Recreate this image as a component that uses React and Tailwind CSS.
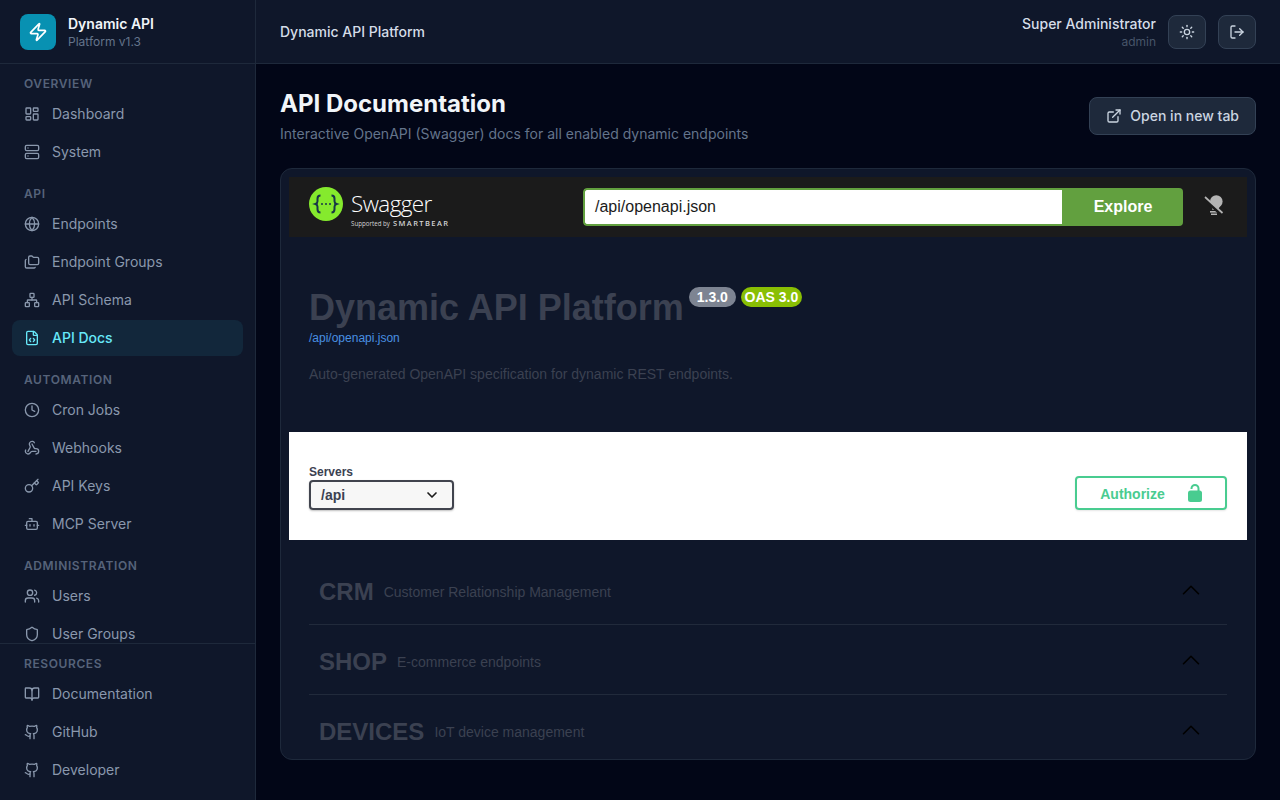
import React from "react";
import {
  LayoutDashboard,
  Server,
  Globe,
  Folders,
  Network,
  FileCode,
  Clock,
  Webhook,
  Key,
  Bot,
  Users,
  Shield,
  BookOpen,
  Github,
  Sun,
  LogOut,
  ExternalLink,
  Zap,
  ChevronDown,
  ChevronUp,
} from "lucide-react";

const sections = [
  {
    title: "Overview",
    items: [
      { label: "Dashboard", icon: LayoutDashboard },
      { label: "System", icon: Server },
    ],
  },
  {
    title: "API",
    items: [
      { label: "Endpoints", icon: Globe },
      { label: "Endpoint Groups", icon: Folders },
      { label: "API Schema", icon: Network },
      { label: "API Docs", icon: FileCode, active: true },
    ],
  },
  {
    title: "Automation",
    items: [
      { label: "Cron Jobs", icon: Clock },
      { label: "Webhooks", icon: Webhook },
      { label: "API Keys", icon: Key },
      { label: "MCP Server", icon: Bot },
    ],
  },
  {
    title: "Administration",
    items: [
      { label: "Users", icon: Users },
      { label: "User Groups", icon: Shield },
    ],
  },
];

const resources = [
  { label: "Documentation", icon: BookOpen },
  { label: "GitHub", icon: Github },
  { label: "Developer", icon: Github },
];

const tags = [
  { name: "CRM", desc: "Customer Relationship Management" },
  { name: "SHOP", desc: "E-commerce endpoints" },
  { name: "DEVICES", desc: "IoT device management" },
];

function NavSection({ title, items }) {
  return (
    <div>
      <div className="px-3 mb-1 h-4 text-xs leading-4 font-semibold uppercase tracking-wider text-[#56637a]">
        {title}
      </div>
      <div className="flex flex-col gap-0.5">
        {items.map((item) => (
          <a
            key={item.label}
            className={
              item.active
                ? "flex items-center gap-3 h-9 px-3 rounded-lg text-sm font-medium bg-[#12273b] text-[#67e8f9]"
                : "flex items-center gap-3 h-9 px-3 rounded-lg text-sm font-normal text-[#8a98ad]"
            }
          >
            <item.icon className="w-4 h-4 shrink-0" strokeWidth={2} />
            {item.label}
          </a>
        ))}
      </div>
    </div>
  );
}

function SwaggerLogo() {
  return (
    <div className="flex items-start h-[60px] pt-[10px]">
      <svg width="34" height="34" viewBox="0 0 34 34" className="shrink-0">
        <circle cx="17" cy="17" r="17" fill="#85ea2d" />
        <path
          d="M11.5 8.5c-2.6 0-3 1.4-3 3.2v2.6c0 1.5-.7 2.3-2 2.700 1.300.4 2 1.200 2 2.700v2.600c0 1.800.4 3.200 3 3.200M22.500 8.500c2.600 0 3 1.400 3 3.200v2.600c0 1.500.7 2.300 2 2.700-1.300.4-2 1.200-2 2.700v2.600c0 1.800-.4 3.200-3 3.200"
          fill="none"
          stroke="#173647"
          strokeWidth="2"
        />
        <circle cx="13" cy="17" r="1" fill="#173647" />
        <circle cx="17" cy="17" r="1" fill="#173647" />
        <circle cx="21" cy="17" r="1" fill="#173647" />
      </svg>
      <div className="ml-[8px] mt-[2px] flex flex-col text-white font-['Open_Sans',sans-serif]">
        <div className="text-[22.500px] leading-[30px] font-light tracking-[-0.6px]">Swagger</div>
        <div className="flex items-center gap-[3px] h-[9px] text-[#d4d4d4] whitespace-nowrap">
          <span className="text-[6.200px] leading-[9px]">Supported by</span>
          <span className="text-[7.500px] leading-[9px] font-semibold tracking-[1.400px]">SMARTBEAR</span>
        </div>
      </div>
    </div>
  );
}

function BulbOff() {
  return (
    <svg width="20" height="22" viewBox="0 0 20 22" className="shrink-0 mb-[2px]">
      <circle cx="12.300" cy="6.500" r="6.300" fill="#b4b4b4" />
      <path d="M7 9h10l-3 6H8.500z" fill="#b4b4b4" />
      <rect x="6" y="16" width="8" height="1.600" fill="#b4b4b4" />
      <rect x="7" y="18.500" width="6" height="1.500" fill="#b4b4b4" />
      <path d="M0 3.500l17 15.500" stroke="#1b1b1b" strokeWidth="3.500" />
      <path d="M1 2l17.500 16" stroke="#b4b4b4" strokeWidth="1.700" />
    </svg>
  );
}

function LockOpen() {
  return (
    <svg width="14" height="18" viewBox="0 0 14 18" className="shrink-0">
      <path d="M3.500 5V4.500a3.500 3.500 0 0 1 7 0V8" fill="none" stroke="#49cc90" strokeWidth="2" />
      <rect x="0" y="6.500" width="14" height="11.500" rx="2.500" fill="#49cc90" />
    </svg>
  );
}

export default function App() {
  return (
    <div className="flex h-[800px] w-[1280px] overflow-hidden bg-[#020617] antialiased font-['Inter',sans-serif]">
      <aside className="flex flex-col w-64 h-full shrink-0 bg-[#0f172a] border-r border-[#1e293b]">
        <div className="flex items-center gap-3 h-16 shrink-0 px-5 border-b border-[#1e293b]">
          <div className="flex items-center justify-center w-9 h-9 rounded-lg bg-[#0891b2]">
            <Zap className="w-5 h-5 text-white" strokeWidth={2} />
          </div>
          <div>
            <div className="text-sm leading-5 font-semibold text-[#f1f5f9]">Dynamic API</div>
            <div className="text-xs leading-4 text-[#64748b]">Platform v1.3</div>
          </div>
        </div>
        <nav className="flex-1 min-h-0 overflow-hidden px-3 pt-3 flex flex-col gap-4">
          {sections.map((s) => (
            <NavSection key={s.title} title={s.title} items={s.items} />
          ))}
        </nav>
        <div className="shrink-0 px-3 pt-3 pb-3 border-t border-[#1e293b]">
          <NavSection title="Resources" items={resources} />
        </div>
      </aside>

      <div className="flex flex-col flex-1 min-w-0">
        <header className="flex items-center justify-between h-16 shrink-0 px-6 bg-[#0f172a] border-b border-[#1e293b]">
          <div className="text-sm font-medium text-[#d5dde8]">Dynamic API Platform</div>
          <div className="flex items-center gap-3">
            <div className="text-right">
              <div className="text-sm leading-5 font-medium text-[#d5dde8]">Super Administrator</div>
              <div className="text-xs leading-4 text-[#475569]">admin</div>
            </div>
            <button className="flex items-center justify-center w-[38px] h-[34px] rounded-lg bg-[#1e293b] border border-[#334155] text-[#cbd5e1]">
              <Sun className="w-4 h-4" />
            </button>
            <button className="flex items-center justify-center w-[38px] h-[34px] rounded-lg bg-[#1e293b] border border-[#334155] text-[#cbd5e1]">
              <LogOut className="w-4 h-4" />
            </button>
          </div>
        </header>

        <main className="flex-1 min-h-0 px-6 pt-6">
          <div className="flex items-start justify-between h-14 mb-6">
            <div>
              <h1 className="text-2xl font-bold text-[#f1f5f9]">API Documentation</h1>
              <p className="mt-1 text-sm text-[#64748b]">
                Interactive OpenAPI (Swagger) docs for all enabled dynamic endpoints
              </p>
            </div>
            <button className="flex items-center gap-2 h-[38px] mt-[9px] px-4 rounded-lg bg-[#1e293b] border border-[#334155] text-sm font-medium text-[#cbd5e1]">
              <ExternalLink className="w-4 h-4" />
              Open in new tab
            </button>
          </div>

          <div className="h-[592px] p-2 rounded-xl bg-[#0f172a] border border-[#1e293b] overflow-hidden">
            <div className="h-[60px] flex items-center px-5 bg-[#1b1b1b]">
              <div className="w-[274px] shrink-0">
                <SwaggerLogo />
              </div>
              <div className="flex w-[600px] h-[38px] shrink-0 rounded-[4px] overflow-hidden font-['Liberation_Sans',sans-serif]">
                <div className="flex items-center flex-1 pl-[10px] bg-white border-2 border-[#62a03f] border-r-0 rounded-l-[4px] text-base text-[#1b1b1b]">
                  /api/openapi.json
                </div>
                <div className="flex items-center justify-center w-[121px] pl-[1px] bg-[#62a03f] text-base font-bold text-white">
                  Explore
                </div>
              </div>
              <div className="ml-[21px]">
                <BulbOff />
              </div>
            </div>

            <div className="px-5 pt-[50px] h-[195px] font-['Liberation_Sans',sans-serif]">
              <div className="flex items-start">
                <h2 className="text-[36px] leading-[40px] mt-[1px] font-bold text-[#3b4151] whitespace-nowrap">
                  Dynamic API Platform
                </h2>
                <span className="ml-[5px] flex items-center h-5 px-2 rounded-full bg-[#7d8492] text-sm font-bold text-white">
                  1.3.0
                </span>
                <span className="ml-[5px] flex items-center justify-center h-5 w-[61px] rounded-full bg-[#89bf04] text-sm font-bold text-white">
                  OAS 3.0
                </span>
              </div>
              <div className="mt-[2px] text-xs leading-4 text-[#4990e2]">/api/openapi.json</div>
              <p className="mt-[18px] text-sm leading-5 text-[#3b4151]">
                Auto-generated OpenAPI specification for dynamic REST endpoints.
              </p>
            </div>

            <div className="flex items-start justify-between h-[108px] px-5 pt-[33px] bg-white font-['Liberation_Sans',sans-serif]">
              <div>
                <div className="mb-[1px] text-xs leading-[14px] font-bold text-[#3b4151]">Servers</div>
                <div className="flex items-center justify-between w-[145px] h-[30px] pl-[10px] pr-[12px] rounded-[4px] border-2 border-[#41444e] bg-[#f7f7f7] shadow-[0_1px_2px_rgba(0,0,0,0.25)] text-sm font-bold text-[#3b4151]">
                  /api
                  <ChevronDown className="w-4 h-4 text-[#1b1b1b]" strokeWidth={2.500} />
                </div>
              </div>
              <div className="flex items-center justify-center gap-[23px] w-[152px] h-[34px] mt-[11px] rounded-[4px] border-2 border-[#49cc90] bg-white shadow-[0_1px_2px_rgba(0,0,0,0.1)] text-sm font-bold text-[#49cc90]">
                <span className="pt-[2px]">Authorize</span>
                <LockOpen />
              </div>
            </div>

            <div className="px-5 pt-[15px] font-['Liberation_Sans',sans-serif]">
              {tags.map((t) => (
                <div key={t.name} className="flex items-center h-[70px] pl-[10px] pt-1 border-b border-[#212a3b]">
                  <span className="text-2xl font-bold text-[#3b4151]">{t.name}</span>
                  <span className="ml-[10px] mt-[1px] text-sm text-[#3b4151]">{t.desc}</span>
                  <ChevronUp className="w-[30px] h-[30px] ml-auto mr-[21px] -mt-[3px] text-[#000000]" strokeWidth={1.300} />
                </div>
              ))}
            </div>
          </div>
        </main>
      </div>
    </div>
  );
}
